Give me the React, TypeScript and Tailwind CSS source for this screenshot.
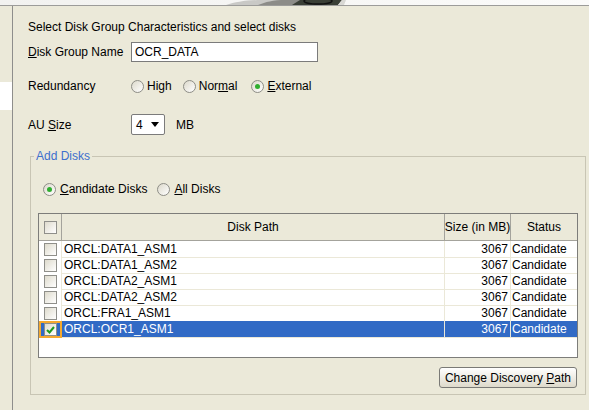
import React from 'react';

type Disk = { path: string; size: number; status: string; checked?: boolean };

const disks: Disk[] = [
  { path: 'ORCL:DATA1_ASM1', size: 3067, status: 'Candidate' },
  { path: 'ORCL:DATA1_ASM2', size: 3067, status: 'Candidate' },
  { path: 'ORCL:DATA2_ASM1', size: 3067, status: 'Candidate' },
  { path: 'ORCL:DATA2_ASM2', size: 3067, status: 'Candidate' },
  { path: 'ORCL:FRA1_ASM1', size: 3067, status: 'Candidate' },
  { path: 'ORCL:OCR1_ASM1', size: 3067, status: 'Candidate', checked: true },
];

const Radio: React.FC<{ on?: boolean }> = ({ on }) => (
  <span className="w-[13px] h-[13px] rounded-full border border-[#8d8d86] bg-gradient-to-br from-[#dcd9cb] to-white flex items-center justify-center shrink-0">
    {on && <span className="w-[5px] h-[5px] rounded-full bg-[#2fae2f]" />}
  </span>
);

const Check: React.FC<{ on?: boolean }> = ({ on }) => (
  <span className="w-[13px] h-[13px] border border-[#8f8f8a] bg-gradient-to-br from-[#dedbcd] to-white flex items-center justify-center">
    {on && (
      <svg width="9" height="8" viewBox="0 0 9 8">
        <path d="M1 4 L3.5 6.5 L8 1" fill="none" stroke="#1f9a1f" strokeWidth="2" />
      </svg>
    )}
  </span>
);

const Banner: React.FC = () => (
  <svg width="589" height="5" viewBox="0 0 589 5" className="block">
    <defs>
      <linearGradient id="bn" x1="0" x2="1" y1="0" y2="0">
        <stop offset="0" stopColor="#f2f2f0" />
        <stop offset="1" stopColor="#fbfbfa" />
      </linearGradient>
    </defs>
    <rect width="589" height="5" fill="url(#bn)" />
    <path d="M226 5 C236 2 246 0 262 0 L300 0 L296 5 Z" fill="#c9c9c6" />
    <path d="M258 5 C266 2 272 0 286 0 L305 0 L300 5 Z" fill="#8c8c88" />
    <path d="M292 5 L300 0 L342 0 L338 5 Z" fill="#3a3f36" />
    <ellipse cx="318" cy="1" rx="14" ry="3" fill="none" stroke="#111" strokeWidth="1.4" />
    <path d="M338 5 L342 0 L346 0 L344 5 Z" fill="#d8d8d4" />
  </svg>
);

export default function App() {
  return (
    <div className="w-[589px] h-[410px] overflow-hidden bg-[#ebe9d9] text-[12px] leading-[16px] text-black font-['Liberation_Sans',Arial,sans-serif] flex flex-col">
      <div className="border-b border-[#9c9c9a]">
        <Banner />
      </div>

      <div className="flex flex-1">
        {/* left nav gutter */}
        <div className="w-[13px] border-r border-[#8e8e8c] flex flex-col">
          <div className="h-[76px]" />
          <div className="h-[28px] bg-white" />
        </div>

        <div className="flex-1 pl-[15px] pt-[13px] flex flex-col">
          <div>Select Disk Group Characteristics and select disks</div>

          <div className="flex items-center mt-[7px] h-[20px]">
            <span className="w-[103px]"><u>D</u>isk Group Name</span>
            <div className="w-[187px] h-[20px] border border-[#7b7b7b] bg-white pl-[3px] flex items-center">OCR_DATA</div>
          </div>

          <div className="flex items-center mt-[16px] h-[16px]">
            <span className="w-[103px]">Redundancy</span>
            <span className="flex items-center gap-[3px]"><Radio /><span>Hi<u>g</u>h</span></span>
            <span className="flex items-center gap-[3px] ml-[11px]"><Radio /><span>Nor<u>m</u>al</span></span>
            <span className="flex items-center gap-[3px] ml-[14px]"><Radio on /><span><u>E</u>xternal</span></span>
          </div>

          <div className="flex items-center mt-[20px] h-[21px]">
            <span className="w-[103px]">AU <u>S</u>ize</span>
            <div className="w-[34px] h-[21px] border border-[#7b7b7b] rounded-[2px] bg-white flex items-center justify-between pl-[4px] pr-[5px]">
              <span>4</span>
              <svg width="8" height="5" viewBox="0 0 8 5"><path d="M0 0 H8 L4 5 Z" fill="#000" /></svg>
            </div>
            <span className="ml-[11px]">MB</span>
          </div>

          <fieldset className="mt-[13px] ml-[2px] w-[556px] h-[247px] border border-[#c8c5b4] px-[7px] flex flex-col">
            <legend className="ml-[-4px] px-[2px] text-[#3d6fcd]">Add Disks</legend>

            <div className="flex items-center mt-[17px] h-[16px]">
              <span className="flex items-center gap-[4px] ml-[5px]"><Radio on /><span><u>C</u>andidate Disks</span></span>
              <span className="flex items-center gap-[4px] ml-[10px]"><Radio /><span><u>A</u>ll Disks</span></span>
            </div>

            <div className="mt-[16px] h-[145px] border border-[#7d7d7a] bg-white flex flex-col">
              {/* header */}
              <div className="grid grid-cols-[23px_383px_66px_1fr] h-[27px] bg-[#ebe9d9] border-b border-[#a4a39c]">
                <div className="flex items-center justify-center border-r border-[#a4a39c]"><Check /></div>
                <div className="flex items-center justify-center border-r border-[#a4a39c]">Disk Path</div>
                <div className="flex items-center justify-center border-r border-[#a4a39c] whitespace-nowrap">Size (in MB)</div>
                <div className="flex items-center justify-center">Status</div>
              </div>

              {disks.map((d) => (
                <div
                  key={d.path}
                  className={
                    d.checked
                      ? 'grid grid-cols-[23px_383px_66px_1fr] h-[16px] bg-[#316ac5] text-white'
                      : 'grid grid-cols-[23px_383px_66px_1fr] h-[16px]'
                  }
                >
                  <div
                    className={
                      d.checked
                        ? 'flex items-center justify-center border-2 border-[#f4a92f] bg-[#316ac5]'
                        : 'flex items-center justify-center border-r border-b border-[#ebe8d8] bg-white'
                    }
                  >
                    <Check on={d.checked} />
                  </div>
                  <div className="pl-[2px] border-r border-b border-[#ebe8d8] flex items-center">{d.path}</div>
                  <div className="pr-[2px] border-r border-b border-[#ebe8d8] flex items-center justify-end">{d.size}</div>
                  <div className="pl-[1px] border-b border-[#ebe8d8] flex items-center">{d.status}</div>
                </div>
              ))}
            </div>

            <div className="flex justify-end mt-[9px] pr-[1px]">
              <button className="h-[21px] px-[5px] rounded-[3px] border border-[#7a7a76] bg-gradient-to-b from-white to-[#dedacb] text-black">
                Change Discovery <u>P</u>ath
              </button>
            </div>
          </fieldset>
        </div>
      </div>
    </div>
  );
}
